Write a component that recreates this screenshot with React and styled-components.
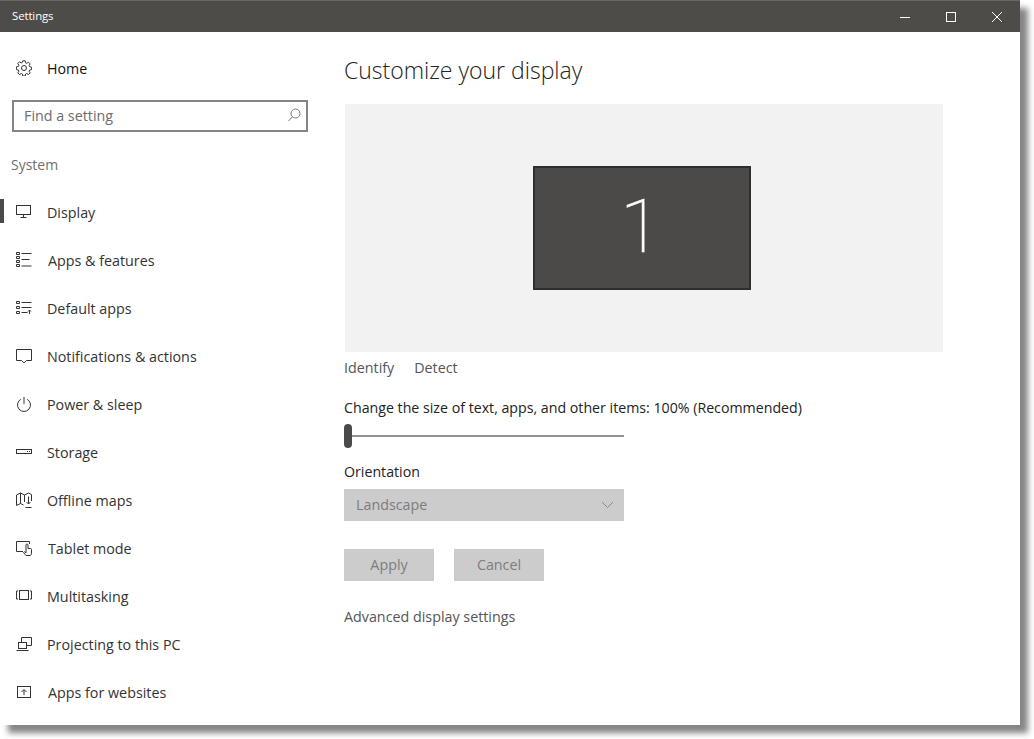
import React from "react";
import styled, { createGlobalStyle } from "styled-components";

const GlobalStyle = createGlobalStyle`
  html, body {
    margin: 0;
    padding: 0;
    background: #fff;
    font-family: "Open Sans", "Noto Sans", "Liberation Sans", sans-serif;
  }
`;

const Page = styled.div`
  width: 1034px;
  height: 739px;
  overflow: hidden;
`;

const Window = styled.div`
  width: 1020px;
  height: 725px;
  display: flex;
  flex-direction: column;
  background: #fff;
  box-shadow: 8px 8px 6px #858585;
`;

const TitleBar = styled.header`
  height: 32px;
  flex: none;
  display: flex;
  align-items: center;
  justify-content: space-between;
  background: #4e4c49;
  border-top: 1px solid #6a6866;
  box-sizing: border-box;
  color: #fff;
  padding-left: 12px;
`;

const TitleText = styled.span`
  font-size: 11.4px;
  letter-spacing: -0.1px;
  position: relative;
  top: -1px;
`;

const WindowButtons = styled.div`
  display: flex;
  height: 100%;
`;

const WindowButton = styled.div`
  width: 46px;
  display: flex;
  align-items: center;
  justify-content: center;
`;

const Body = styled.div`
  flex: 1;
  display: flex;
  min-height: 0;
`;

const Sidebar = styled.nav`
  width: 320px;
  flex: none;
  display: flex;
  flex-direction: column;
`;

const HomeRow = styled.div`
  height: 48px;
  margin-top: 12px;
  display: flex;
  align-items: center;
  padding-left: 16px;
  gap: 15px;
  font-size: 14.2px;
  color: #111;
`;

const SearchBox = styled.div`
  width: 296px;
  height: 32px;
  box-sizing: border-box;
  margin: 8px 0 0 12px;
  border: 2px solid #858585;
  display: flex;
  align-items: center;
  justify-content: space-between;
  padding: 0 5px 2px 10px;
  font-size: 14.3px;
  color: #6d6d6d;
`;

const SectionLabel = styled.div`
  margin: 22px 0 0 11px;
  height: 22px;
  line-height: 22px;
  font-size: 14px;
  color: #6f6f6f;
`;

const NavList = styled.div`
  margin-top: 12px;
  display: flex;
  flex-direction: column;
`;

const NavRow = styled.div`
  position: relative;
  height: 48px;
  display: flex;
  align-items: center;
  padding-left: 16px;
  gap: ${(p) => p.$gap || 15}px;
  font-size: 14.3px;
  color: #333;

  ${(p) =>
    p.$active &&
    `
    &::before {
      content: "";
      position: absolute;
      left: 0;
      top: 11px;
      width: 4px;
      height: 24px;
      background: #4c4a48;
    }
  `}
`;

const Icon = styled.svg`
  width: 16px;
  height: 16px;
  flex: none;
  fill: none;
  stroke: ${(p) => p.$color || "#333"};
  stroke-width: 1;
`;

const Main = styled.main`
  flex: 1;
  padding-left: 24px;
  display: flex;
  flex-direction: column;
  align-items: flex-start;
`;

const Heading = styled.h1`
  margin: 20px 0 0;
  height: 36px;
  line-height: 36px;
  font-size: 23px;
  font-weight: 300;
  color: #222;
`;

const Preview = styled.div`
  width: 594px;
  height: 248px;
  margin: 16px 0 0 1px;
  padding-right: 4px;
  background: #f2f2f2;
  display: flex;
  align-items: center;
  justify-content: center;
`;

const Monitor = styled.div`
  width: 218px;
  height: 124px;
  box-sizing: border-box;
  border: 2px solid #2e2e2e;
  background: #4c4a48;
  color: #fff;
  display: flex;
  align-items: center;
  justify-content: center;
  padding: 0 3px 2px 0;
  font-family: "Roboto", "Open Sans", sans-serif;
  font-weight: 100;
  font-size: 74px;
  -webkit-text-stroke: 0.6px #fff;
  line-height: 1;
`;

const LinkRow = styled.div`
  display: flex;
  gap: 20px;
  margin-top: 6px;
  height: 20px;
  line-height: 20px;
  font-size: 14.3px;
  color: #555;
`;

const FieldLabel = styled.div`
  height: 20px;
  line-height: 20px;
  font-size: 14.2px;
  color: #222;
  margin-top: ${(p) => p.$top}px;
  white-space: nowrap;
`;

const Slider = styled.div`
  position: relative;
  width: 280px;
  height: 24px;
  margin-top: 6px;

  &::before {
    content: "";
    position: absolute;
    left: 0;
    right: 0;
    top: 11px;
    height: 2px;
    background: #929292;
  }
`;

const Thumb = styled.div`
  position: absolute;
  left: 0;
  top: 0;
  width: 8px;
  height: 24px;
  border-radius: 4px;
  background: #4c4a48;
`;

const Select = styled.div`
  width: 280px;
  height: 32px;
  margin-top: 7px;
  box-sizing: border-box;
  background: #ccc;
  color: #7d7d7d;
  display: flex;
  align-items: center;
  justify-content: space-between;
  padding: 0 8px 2px 12px;
  font-size: 14.3px;
`;

const ButtonRow = styled.div`
  display: flex;
  gap: 20px;
  margin-top: 28px;
`;

const Button = styled.div`
  width: 90px;
  height: 32px;
  box-sizing: border-box;
  padding-bottom: 1px;
  background: #ccc;
  color: #7d7d7d;
  display: flex;
  align-items: center;
  justify-content: center;
  font-size: 14.3px;
`;

const AdvancedLink = styled.div`
  margin-top: 26px;
  height: 20px;
  line-height: 20px;
  font-size: 14.3px;
  color: #555;
`;

const navItems = [
  {
    label: "Display",
    active: true,
    icon: (
      <>
        <rect x="0.5" y="1.5" width="14" height="9" />
        <path d="M7.500 10.500v2.500M4.500 13.500h6" />
      </>
    ),
  },
  {
    label: "Apps & features",
    gap: 16,
    icon: (
      <>
        <path d="M.5 .5h3v2h-3zM.5 4.500h3v2h-3zM.5 8.500h3v2h-3zM.5 12.500h3v2h-3z" />
        <path d="M5.500 1.500h10M5.500 7.500h8M5.500 14h10" />
      </>
    ),
  },
  {
    label: "Default apps",
    icon: (
      <>
        <path d="M.5 1.500h3v2h-3zM.5 6.500h3v2h-3zM.5 11.500h3v2h-3z" />
        <path d="M5.500 2.500h10M5.500 7.500h10M5.500 12.500h6M13.500 14v-4M12 11.500l1.500-1.500 1.500 1.500" />
      </>
    ),
  },
  {
    label: "Notifications & actions",
    icon: <path d="M.5 1.500h15v11h-5l-2.500 2.500-2.500-2.500h-5z" />,
  },
  {
    label: "Power & sleep",
    icon: (
      <>
        <path d="M4.800 3.300a6.500 6.500 0 1 0 6.400 0" />
        <path d="M8 1v7" />
      </>
    ),
  },
  {
    label: "Storage",
    icon: (
      <>
        <rect x="0.5" y="5.500" width="15" height="4" />
        <path d="M11 7.500h3" strokeDasharray="1 1" />
      </>
    ),
  },
  {
    label: "Offline maps",
    icon: (
      <>
        <path d="M.5 13.500V3l4-2 4 2 4-2 3 1.500V9M.5 13.500l4-2 3 1.500M4.500 1v10.500M8.500 3v7" />
        <path d="M12.500 4.500v7.500M10.500 10l2 2 2-2M9.500 15.500h6" />
      </>
    ),
  },
  {
    label: "Tablet mode",
    gap: 16,
    icon: (
      <>
        <path d="M7 11.500H.5v-10h13V4" />
        <path d="M10 15.500L7.500 12.500l1-.7 1.500 1V5a1 1 0 0 1 2 0v3.500h2.500a1 1 0 0 1 1 1V13c0 1.200-.7 2.500-1.500 2.500z" />
      </>
    ),
  },
  {
    label: "Multitasking",
    icon: (
      <>
        <rect x="3.500" y="2.500" width="9" height="9" />
        <path d="M2 3H.5v8H2M14 3h1.500v8H14" />
      </>
    ),
  },
  {
    label: "Projecting to this PC",
    icon: (
      <>
        <path d="M5.500 6V1.500h10v8H11" />
        <rect x="2.500" y="6.500" width="8" height="6" />
        <path d="M.5 14.500h12" />
      </>
    ),
  },
  {
    label: "Apps for websites",
    gap: 16,
    icon: (
      <>
        <rect x="1.500" y="2.500" width="13" height="11" />
        <path d="M8 11V6M5.500 8L8 5.500 10.500 8" />
      </>
    ),
  },
];

const WhiteGlyph = styled.svg`
  width: 12px;
  height: 12px;
  fill: none;
  stroke: #fff;
  stroke-width: 1;
`;

const App = () => {
  return (
    <Page>
      <GlobalStyle />
      <Window>
        <TitleBar>
          <TitleText>Settings</TitleText>
          <WindowButtons>
            <WindowButton>
              <WhiteGlyph viewBox="0 0 12 12">
                <path d="M1 6.500h10" />
              </WhiteGlyph>
            </WindowButton>
            <WindowButton>
              <WhiteGlyph viewBox="0 0 12 12">
                <rect x="1.500" y="1.500" width="9" height="9" />
              </WhiteGlyph>
            </WindowButton>
            <WindowButton>
              <WhiteGlyph viewBox="0 0 12 12">
                <path d="M1 1l10 10M11 1L1 11" />
              </WhiteGlyph>
            </WindowButton>
          </WindowButtons>
        </TitleBar>
        <Body>
          <Sidebar>
            <HomeRow>
              <Icon viewBox="0 0 16 16">
                <circle cx="8" cy="8" r="2.500" />
                <path d="M6.800 .8h2.400l.4 2 1.200.5 1.700-1.100 1.700 1.700-1.100 1.700.5 1.200 2 .4v2.400l-2 .4-.5 1.200 1.100 1.700-1.700 1.700-1.700-1.100-1.200.5-.4 2H6.800l-.4-2-1.200-.5-1.700 1.100-1.700-1.700 1.100-1.700-.5-1.200-2-.4V6.800l2-.4.5-1.200-1.100-1.700 1.700-1.700 1.700 1.100 1.200-.5z" />
              </Icon>
              Home
            </HomeRow>
            <SearchBox>
              Find a setting
              <Icon viewBox="0 0 16 16" $color="#777">
                <circle cx="10.500" cy="6.500" r="4.500" />
                <path d="M7.300 9.800L3.500 14" />
              </Icon>
            </SearchBox>
            <SectionLabel>System</SectionLabel>
            <NavList>
              {navItems.map((item) => (
                <NavRow key={item.label} $active={item.active} $gap={item.gap}>
                  <Icon viewBox="0 0 16 16">{item.icon}</Icon>
                  {item.label}
                </NavRow>
              ))}
            </NavList>
          </Sidebar>
          <Main>
            <Heading>Customize your display</Heading>
            <Preview>
              <Monitor>1</Monitor>
            </Preview>
            <LinkRow>
              <span>Identify</span>
              <span>Detect</span>
            </LinkRow>
            <FieldLabel $top={20}>
              Change the size of text, apps, and other items: 100% (Recommended)
            </FieldLabel>
            <Slider>
              <Thumb />
            </Slider>
            <FieldLabel $top={14}>Orientation</FieldLabel>
            <Select>
              Landscape
              <Icon viewBox="0 0 16 16" $color="#8a8a8a">
                <path d="M2 6l5.500 5.500L13 6" />
              </Icon>
            </Select>
            <ButtonRow>
              <Button>Apply</Button>
              <Button>Cancel</Button>
            </ButtonRow>
            <AdvancedLink>Advanced display settings</AdvancedLink>
          </Main>
        </Body>
      </Window>
    </Page>
  );
};

export default App;
